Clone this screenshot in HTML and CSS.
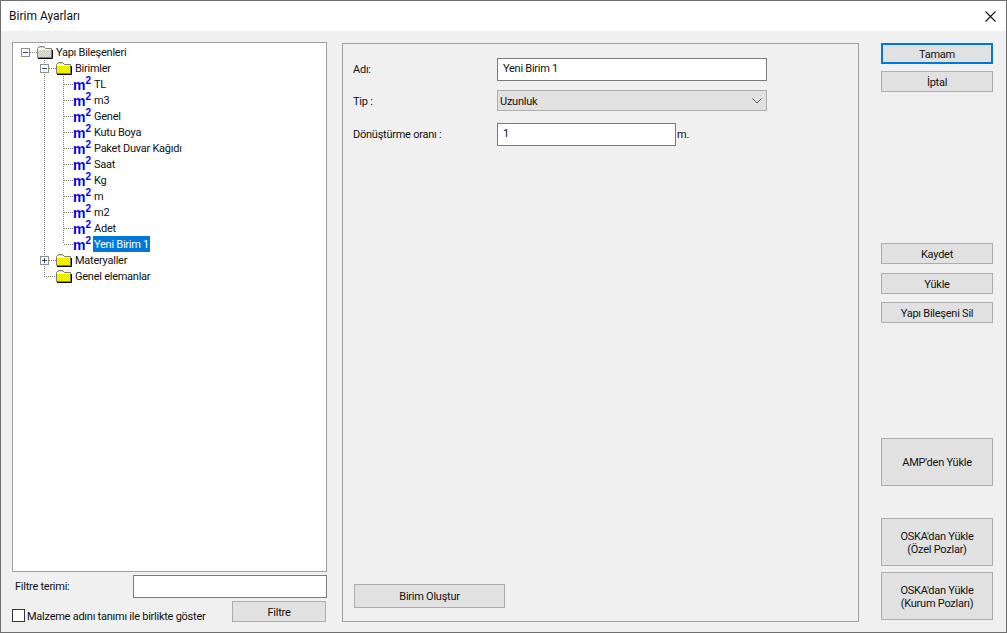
FILE: index.html
```html
<!DOCTYPE html>
<html lang="tr">
<head>
<meta charset="utf-8">
<title>Birim Ayarları</title>
<link rel="stylesheet" href="styles.css">
</head>
<body>
<svg class="defs" width="0" height="0" aria-hidden="true">
  <defs>
    <pattern id="dither" width="2" height="2" patternUnits="userSpaceOnUse">
      <rect width="2" height="2" fill="#ffff00"/>
      <rect width="1" height="1" fill="#c8c8c0"/>
      <rect x="1" y="1" width="1" height="1" fill="#c8c8c0"/>
    </pattern>
    <symbol id="folder" viewBox="0 0 16 14">
      <path d="M0.5 12.5V3.5L2.5 1.5H6.5L8.5 3.5H14.5V12.5Z" fill="url(#dither)" stroke="#808070"/>
      <path d="M1 3.5H8M1 4.5H14" stroke="#fffde0" fill="none"/>
      <path d="M1 13.5H15.5V5" stroke="#000" fill="none"/>
    </symbol>
  </defs>
</svg>
<div class="window">
  <header class="titlebar">
    <span class="title">Birim Ayarları</span>
    <svg class="close" width="11" height="11" viewBox="0 0 11 11"><path d="M0.5 0.5L10.5 10.5M10.5 0.5L0.5 10.5" stroke="#111" stroke-width="1.1" fill="none"/></svg>
  </header>
  <main class="content">
    <section class="left">
      <div class="tree">
        <svg class="tree-lines" width="313" height="528" viewBox="0 0 313 528">
          <g stroke="#7a7a7a" stroke-dasharray="1 1" fill="none">
            <path d="M31.5 15V233M50.5 31V201"/>
            <path d="M17 9.5H24M36 25.5H44M31 233.5H44M36 217.5H44"/>
            <path d="M51 41.5H60M51 57.5H60M51 73.5H60M51 89.5H60M51 105.5H60M51 121.5H60M51 137.5H60M51 153.5H60M51 169.5H60M51 185.5H60M51 201.5H60"/>
          </g>
          <g fill="#fff" stroke="#8e8e8e">
            <rect x="8.5" y="5.5" width="8" height="8"/>
            <rect x="27.5" y="21.5" width="8" height="8"/>
            <rect x="27.5" y="213.5" width="8" height="8"/>
          </g>
          <path d="M10 9.5H15M29 25.5H34M29 217.5H34M31.5 215V220" stroke="#2a3f8f" fill="none"/>
        </svg>
        <div class="node lvl0"><svg class="folder"><use href="#folder"/></svg><span>Yapı Bileşenleri</span></div>
        <div class="node lvl1"><svg class="folder"><use href="#folder"/></svg><span>Birimler</span></div>
        <div class="node lvl2"><span class="unit">m<sup>2</sup></span><span class="label">TL</span></div>
        <div class="node lvl2"><span class="unit">m<sup>2</sup></span><span class="label">m3</span></div>
        <div class="node lvl2"><span class="unit">m<sup>2</sup></span><span class="label">Genel</span></div>
        <div class="node lvl2"><span class="unit">m<sup>2</sup></span><span class="label">Kutu Boya</span></div>
        <div class="node lvl2"><span class="unit">m<sup>2</sup></span><span class="label">Paket Duvar Kağıdı</span></div>
        <div class="node lvl2"><span class="unit">m<sup>2</sup></span><span class="label">Saat</span></div>
        <div class="node lvl2"><span class="unit">m<sup>2</sup></span><span class="label">Kg</span></div>
        <div class="node lvl2"><span class="unit">m<sup>2</sup></span><span class="label">m</span></div>
        <div class="node lvl2"><span class="unit">m<sup>2</sup></span><span class="label">m2</span></div>
        <div class="node lvl2"><span class="unit">m<sup>2</sup></span><span class="label">Adet</span></div>
        <div class="node lvl2"><span class="unit">m<sup>2</sup></span><span class="label selected">Yeni Birim 1</span></div>
        <div class="node lvl1"><svg class="folder"><use href="#folder"/></svg><span>Materyaller</span></div>
        <div class="node lvl1"><svg class="folder"><use href="#folder"/></svg><span>Genel elemanlar</span></div>
      </div>
      <div class="filter-row">
        <label class="filter-label" for="filtre">Filtre terimi:</label>
        <input id="filtre" class="filter-input" type="text">
      </div>
      <div class="check-row">
        <label class="check"><span class="box"></span><span class="check-text">Malzeme adını tanımı ile birlikte göster</span></label>
        <button class="btn filter-btn">Filtre</button>
      </div>
    </section>
    <section class="panel">
      <div class="form">
        <label class="form-label">Adı:</label>
        <input class="field wide" type="text" value="Yeni Birim 1">
        <label class="form-label">Tip :</label>
        <div class="combo"><span>Uzunluk</span>
          <svg width="10" height="6" viewBox="0 0 10 6"><path d="M0.5 0.5L5 5L9.5 0.5" stroke="#555" fill="none"/></svg>
        </div>
        <label class="form-label">Dönüştürme oranı :</label>
        <div class="ratio"><input class="field short" type="text" value="1"><span>m.</span></div>
      </div>
      <button class="btn create">Birim Oluştur</button>
    </section>
    <aside class="actions">
      <button class="btn default">Tamam</button>
      <button class="btn gap-7">İptal</button>
      <button class="btn gap-save">Kaydet</button>
      <button class="btn gap-9">Yükle</button>
      <button class="btn gap-8">Yapı Bileşeni Sil</button>
      <button class="btn tall gap-amp">AMP'den Yükle</button>
      <button class="btn tall gap-oska">OSKA'dan Yükle<br>(Özel Pozlar)</button>
      <button class="btn tall gap-6">OSKA'dan Yükle<br>(Kurum Pozları)</button>
    </aside>
  </main>
</div>
</body>
</html>
```
FILE: styles.css
```css
* { box-sizing: border-box; }
html, body { margin: 0; padding: 0; }
body {
  width: 1007px;
  height: 633px;
  overflow: hidden;
  font-family: "Roboto", "Open Sans", sans-serif;
  font-size: 11px;
  letter-spacing: -0.25px;
  color: #111;
  background: #f0f0f0;
}
.defs { position: absolute; }
.window {
  width: 1007px;
  height: 633px;
  border: 1px solid #6e6e6e;
  background: #f0f0f0;
  display: flex;
  flex-direction: column;
}
.titlebar {
  height: 30px;
  flex: none;
  background: #fff;
  display: flex;
  align-items: center;
  justify-content: space-between;
  padding: 0 10px 0 8px;
}
.title { font-size: 12px; letter-spacing: 0; }
.content {
  flex: 1;
  display: flex;
  padding: 11px 13px 9px 11px;
  min-height: 0;
}
.left {
  width: 315px;
  flex: none;
  display: flex;
  flex-direction: column;
}
.tree {
  position: relative;
  height: 530px;
  flex: none;
  background: #fff;
  border: 1px solid #a0a0a0;
  padding: 1px 0 0;
}
.tree-lines { position: absolute; left: 0; top: 0; }
.node {
  position: relative;
  height: 16px;
  display: flex;
  align-items: center;
  white-space: nowrap;
}
.lvl0 { padding-left: 24px; }
.lvl1 { padding-left: 43px; }
.lvl2 { padding-left: 60px; }
.folder { width: 16px; height: 14px; margin-right: 3px; flex: none; }
.unit {
  width: 20px;
  flex: none;
  font-family: "Liberation Sans", sans-serif;
  font-weight: 700;
  font-size: 14px;
  letter-spacing: 0;
  line-height: 16px;
  color: #0000f0;
  position: relative;
  top: 1px;
}
.unit sup {
  font-size: 10px;
  line-height: 0;
  vertical-align: 6px;
}
.label { padding: 0 1px; height: 16px; line-height: 17px; }
.selected { background: #0078d7; color: #fff; }
.filter-row {
  display: flex;
  align-items: center;
  justify-content: space-between;
  margin-top: 3px;
  height: 23px;
}
.filter-label { padding-left: 3px; }
.filter-input {
  width: 194px;
  height: 23px;
  border: 1px solid #7a7a7a;
  background: #fff;
  margin: 0;
  padding: 0;
}
.check-row {
  display: flex;
  justify-content: space-between;
  margin-top: 3px;
  padding-right: 1px;
}
.check { display: flex; align-items: center; gap: 2px; height: 21px; padding-top: 8px; }
.check-text { padding-top: 1px; }
.box {
  width: 13px;
  height: 13px;
  border: 1px solid #333;
  background: #fff;
  flex: none;
}
.btn {
  display: block;
  flex: none;
  margin: 0;
  padding: 1px 0 0;
  width: 112px;
  height: 21px;
  background: #e1e1e1;
  border: 1px solid #adadad;
  font: inherit;
  letter-spacing: inherit;
  color: #111;
  line-height: 13px;
  text-align: center;
}
.filter-btn { width: 94px; }
.panel {
  width: 517px;
  flex: none;
  margin: 1px 0 0 15px;
  height: 579px;
  border: 1px solid #a0a0a0;
  padding: 14px 11px 13px 10px;
  display: flex;
  flex-direction: column;
  justify-content: space-between;
}
.form {
  display: grid;
  grid-template-columns: 144px 270px;
  grid-template-rows: 32px 33px 23px;
  align-items: start;
}
.form-label { line-height: 24px; }
.field {
  height: 23px;
  border: 1px solid #7a7a7a;
  background: #fff;
  margin: 0;
  padding: 0 5px 2px;
  font: inherit;
  letter-spacing: inherit;
  color: #111;
}
.wide { width: 270px; }
.short { width: 179px; }
.combo {
  height: 21px;
  width: 270px;
  background: #e1e1e1;
  border: 1px solid #adadad;
  display: flex;
  align-items: center;
  justify-content: space-between;
  padding: 1px 4px 0 2px;
}
.ratio { display: flex; align-items: center; gap: 1px; }
.create { width: 151px; height: 24px; margin-left: 1px; }
.actions {
  width: 112px;
  flex: none;
  margin: 1px 0 0 22px;
  display: flex;
  flex-direction: column;
}
.default { border: 2px solid #0078d7; }
.gap-6 { margin-top: 6px; }
.gap-7 { margin-top: 7px; }
.gap-8 { margin-top: 8px; }
.gap-9 { margin-top: 9px; }
.gap-save { margin-top: 151px; }
.gap-amp { margin-top: 115px; }
.gap-oska { margin-top: 32px; }
.btn.tall { height: 48px; }
```
